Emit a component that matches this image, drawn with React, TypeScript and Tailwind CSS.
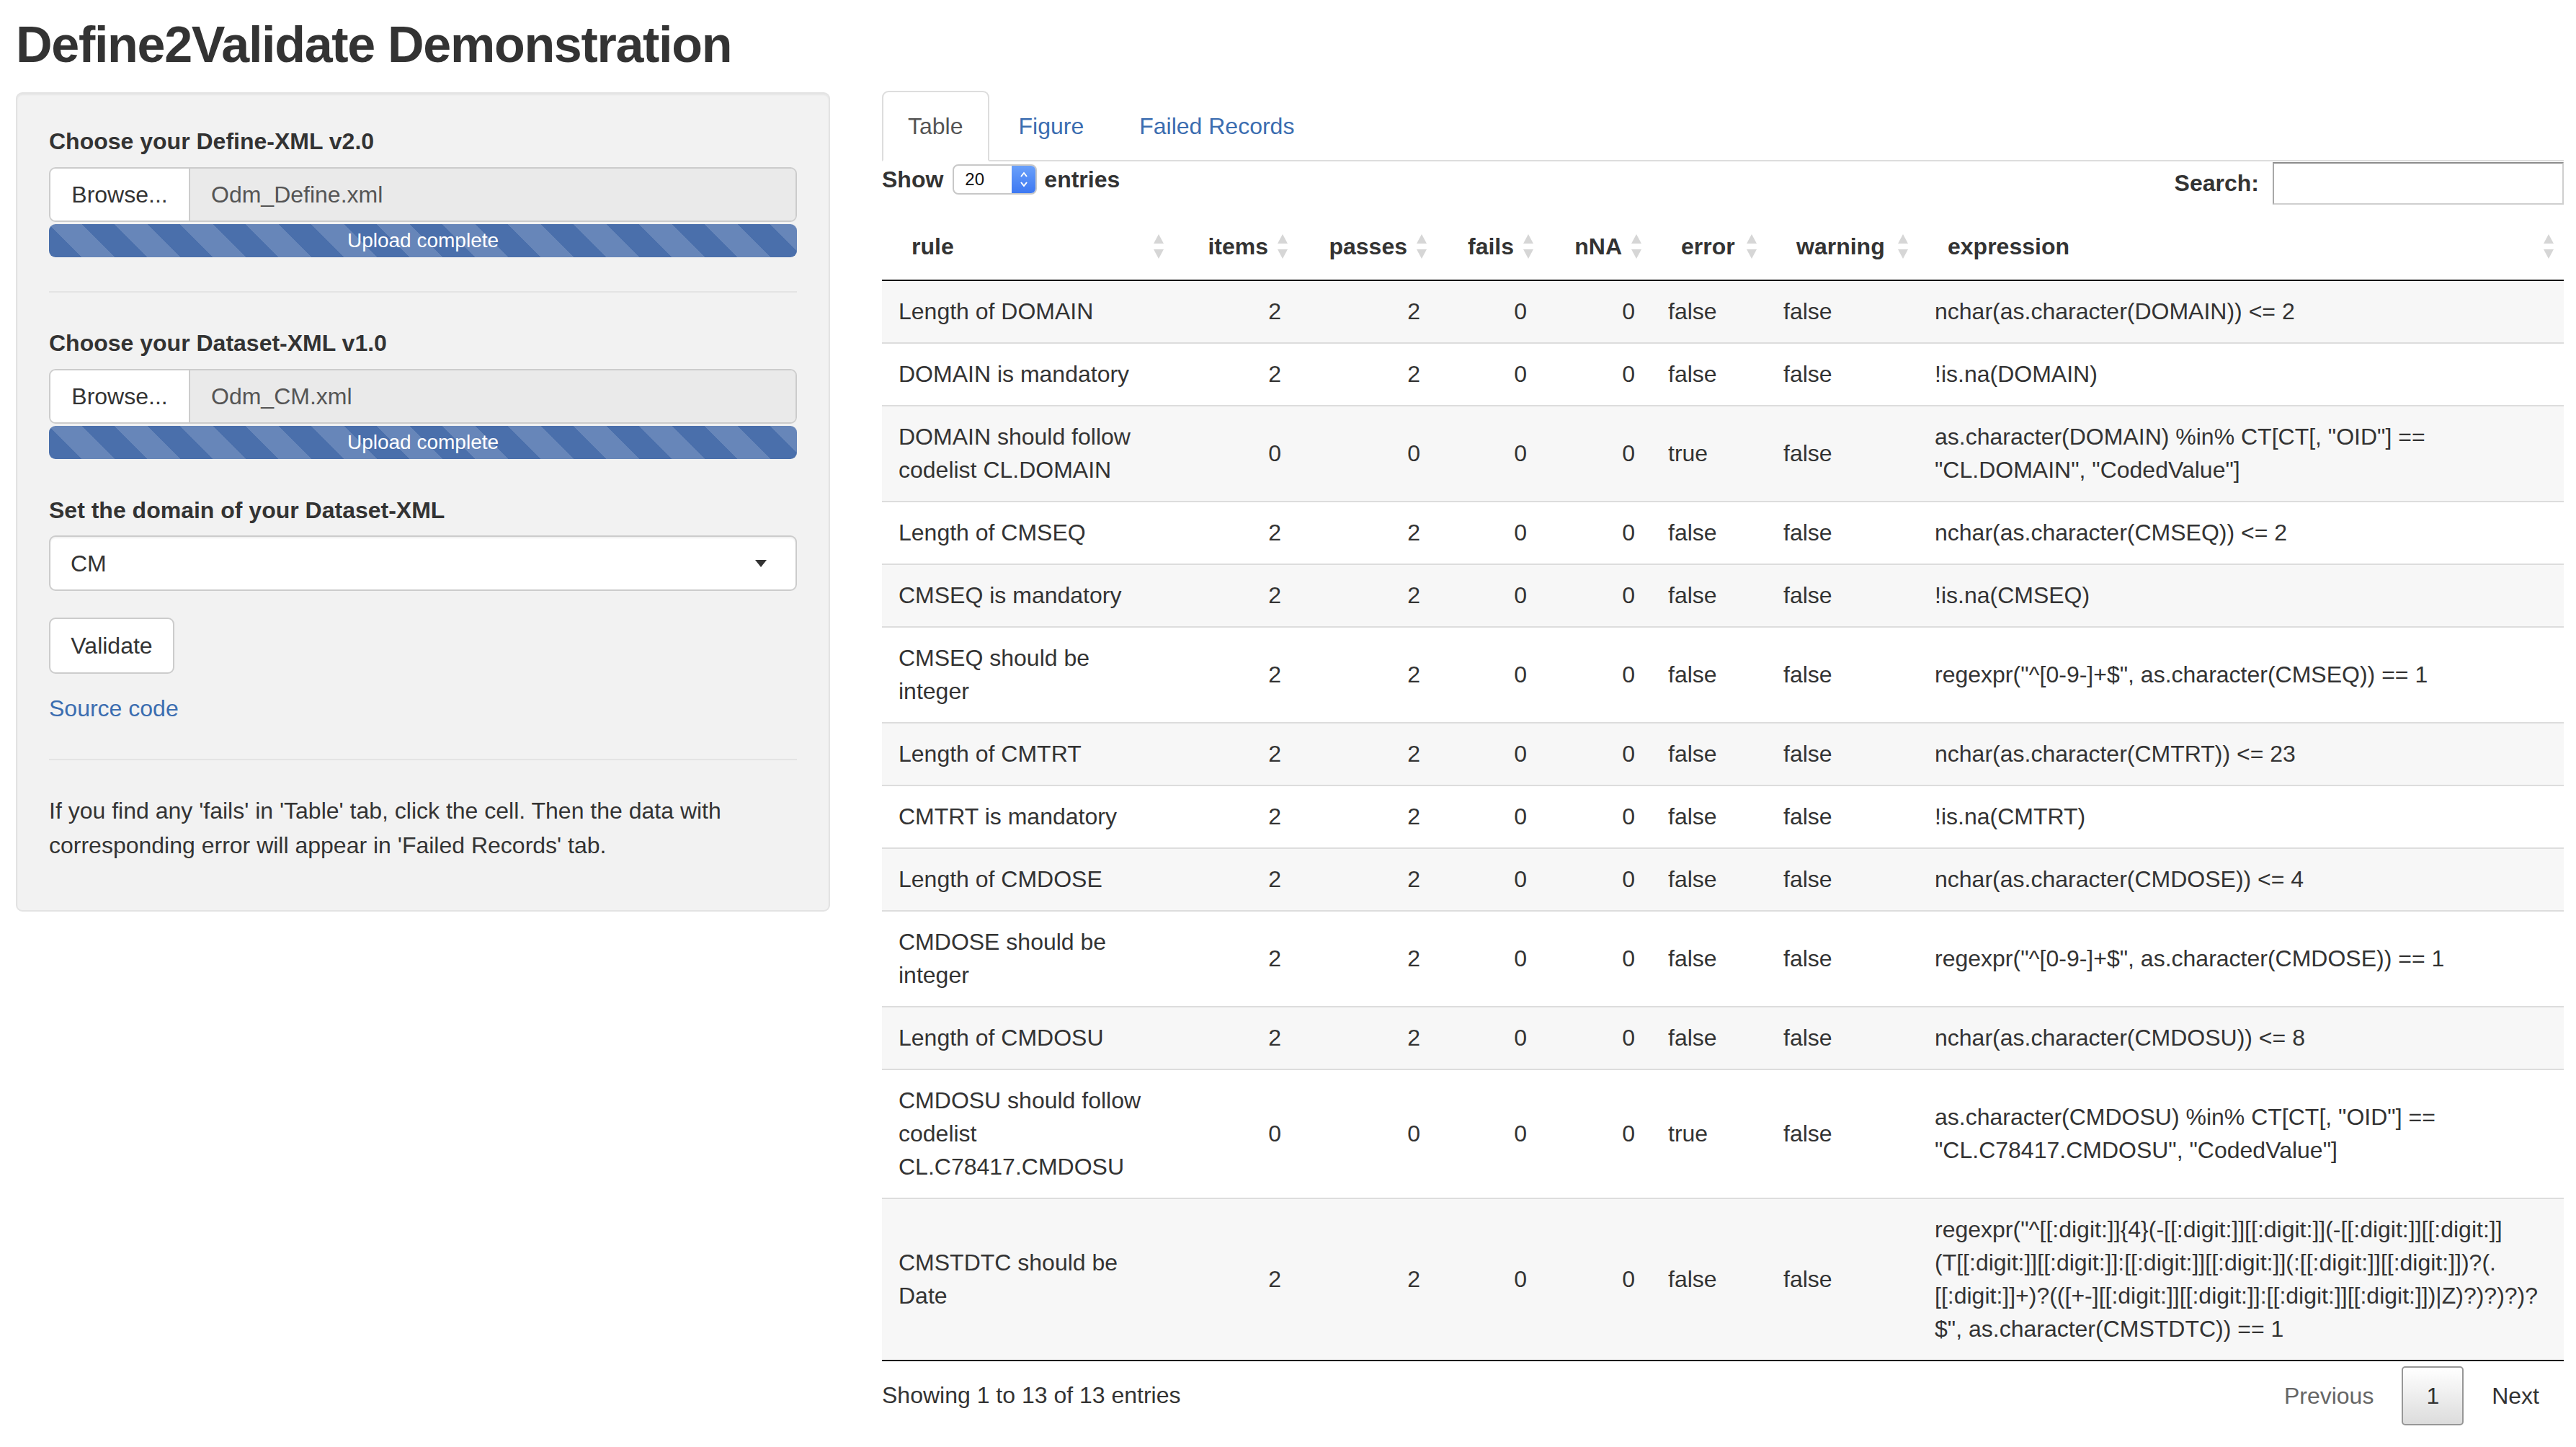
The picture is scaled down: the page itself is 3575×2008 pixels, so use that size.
import React from 'react';

interface RuleRow {
  rule: string[];
  items: number;
  passes: number;
  fails: number;
  nNA: number;
  error: string;
  warning: string;
  expression: string[];
}

const rows: RuleRow[] = [
  { rule: ['Length of DOMAIN'], items: 2, passes: 2, fails: 0, nNA: 0, error: 'false', warning: 'false', expression: ['nchar(as.character(DOMAIN)) <= 2'] },
  { rule: ['DOMAIN is mandatory'], items: 2, passes: 2, fails: 0, nNA: 0, error: 'false', warning: 'false', expression: ['!is.na(DOMAIN)'] },
  { rule: ['DOMAIN should follow', 'codelist CL.DOMAIN'], items: 0, passes: 0, fails: 0, nNA: 0, error: 'true', warning: 'false', expression: ['as.character(DOMAIN) %in% CT[CT[, "OID"] ==', '"CL.DOMAIN", "CodedValue"]'] },
  { rule: ['Length of CMSEQ'], items: 2, passes: 2, fails: 0, nNA: 0, error: 'false', warning: 'false', expression: ['nchar(as.character(CMSEQ)) <= 2'] },
  { rule: ['CMSEQ is mandatory'], items: 2, passes: 2, fails: 0, nNA: 0, error: 'false', warning: 'false', expression: ['!is.na(CMSEQ)'] },
  { rule: ['CMSEQ should be', 'integer'], items: 2, passes: 2, fails: 0, nNA: 0, error: 'false', warning: 'false', expression: ['regexpr("^[0-9-]+$", as.character(CMSEQ)) == 1'] },
  { rule: ['Length of CMTRT'], items: 2, passes: 2, fails: 0, nNA: 0, error: 'false', warning: 'false', expression: ['nchar(as.character(CMTRT)) <= 23'] },
  { rule: ['CMTRT is mandatory'], items: 2, passes: 2, fails: 0, nNA: 0, error: 'false', warning: 'false', expression: ['!is.na(CMTRT)'] },
  { rule: ['Length of CMDOSE'], items: 2, passes: 2, fails: 0, nNA: 0, error: 'false', warning: 'false', expression: ['nchar(as.character(CMDOSE)) <= 4'] },
  { rule: ['CMDOSE should be', 'integer'], items: 2, passes: 2, fails: 0, nNA: 0, error: 'false', warning: 'false', expression: ['regexpr("^[0-9-]+$", as.character(CMDOSE)) == 1'] },
  { rule: ['Length of CMDOSU'], items: 2, passes: 2, fails: 0, nNA: 0, error: 'false', warning: 'false', expression: ['nchar(as.character(CMDOSU)) <= 8'] },
  { rule: ['CMDOSU should follow', 'codelist', 'CL.C78417.CMDOSU'], items: 0, passes: 0, fails: 0, nNA: 0, error: 'true', warning: 'false', expression: ['as.character(CMDOSU) %in% CT[CT[, "OID"] ==', '"CL.C78417.CMDOSU", "CodedValue"]'] },
  {
    rule: ['CMSTDTC should be', 'Date'],
    items: 2,
    passes: 2,
    fails: 0,
    nNA: 0,
    error: 'false',
    warning: 'false',
    expression: [
      'regexpr("^[[:digit:]]{4}(-[[:digit:]][[:digit:]](-[[:digit:]][[:digit:]]',
      '(T[[:digit:]][[:digit:]]:[[:digit:]][[:digit:]](:[[:digit:]][[:digit:]])?(.',
      '[[:digit:]]+)?(([+-][[:digit:]][[:digit:]]:[[:digit:]][[:digit:]])|Z)?)?)?)?',
      '$", as.character(CMSTDTC)) == 1',
    ],
  },
];

const headers = [
  { label: 'rule', className: 'w-[405px] text-left pl-[41px]' },
  { label: 'items', className: 'w-[172px] text-right' },
  { label: 'passes', className: 'w-[193px] text-right' },
  { label: 'fails', className: 'w-[148px] text-right' },
  { label: 'nNA', className: 'w-[150px] text-right' },
  { label: 'error', className: 'w-[160px] text-left pl-[41px]' },
  { label: 'warning', className: 'w-[210px] text-left pl-[41px]' },
  { label: 'expression', className: 'w-[896px] text-left pl-[41px]' },
];

const SortIcon = () => (
  <svg className="absolute right-[13px] top-1/2 -translate-y-1/2" width="16" height="36" viewBox="0 0 16 36">
    <path d="M8 1 L15 14 L1 14 Z" fill="#d6d6d6" />
    <path d="M1 22 L15 22 L8 35 Z" fill="#d6d6d6" />
  </svg>
);

const FileField = ({ name }: { name: string }) => (
  <div>
    <div className="flex h-[76px] rounded-[9px] border-2 border-[#ccc] overflow-hidden">
      <div className="w-[194px] bg-white border-r-2 border-[#ccc] flex items-center justify-center text-[#333]">
        Browse...
      </div>
      <div className="flex-1 bg-[#eaeaea] flex items-center pl-[29px] text-[#555]">{name}</div>
    </div>
    <div className="mt-[3px] h-[46px] rounded-[9px] bg-[#4a6fab] bg-[linear-gradient(45deg,rgba(255,255,255,.16)_25%,transparent_25%,transparent_50%,rgba(255,255,255,.16)_50%,rgba(255,255,255,.16)_75%,transparent_75%,transparent)] bg-[length:91px_91px] text-center text-white text-[28px] leading-[46px]">
      Upload complete
    </div>
  </div>
);

const Sidebar = () => (
  <div className="w-[1130px] shrink-0 rounded-[9px] border-2 border-[#e3e3e3] bg-[#f2f2f2] px-[44px] pt-[43px] pb-[43px] shadow-[inset_0_2px_2px_rgba(0,0,0,0.05)]">
    <p className="font-bold leading-[46px] mb-[13px]">Choose your Define-XML v2.0</p>
    <FileField name="Odm_Define.xml" />
    <div className="mt-[47px] h-[2px] bg-[#e4e4e4]" />
    <p className="mt-[47px] font-bold leading-[46px] mb-[13px]">Choose your Dataset-XML v1.0</p>
    <FileField name="Odm_CM.xml" />
    <p className="mt-[48px] font-bold leading-[46px] mb-[12px]">Set the domain of your Dataset-XML</p>
    <div className="h-[77px] rounded-[9px] border-2 border-[#ccc] bg-white flex items-center justify-between pl-[28px] pr-[40px] shadow-[inset_0_2px_2px_rgba(0,0,0,0.06)]">
      <span className="text-[#333]">CM</span>
      <svg width="16" height="10" viewBox="0 0 16 10">
        <path d="M0 0 L16 0 L8 10 Z" fill="#333" />
      </svg>
    </div>
    <button className="mt-[37px] h-[78px] w-[174px] rounded-[9px] border-2 border-[#ccc] bg-white text-[#333] leading-[46px]">
      Validate
    </button>
    <p className="mt-[25px] leading-[46px] text-[#3b6db0]">Source code</p>
    <div className="mt-[47px] h-[2px] bg-[#e4e4e4]" />
    <p className="mt-[46px] leading-[48px] mb-[23px]">
      If you find any 'fails' in 'Table' tab, click the cell. Then the data with
      <br />
      corresponding error will appear in 'Failed Records' tab.
    </p>
  </div>
);

const Tabs = () => (
  <div className="flex border-b-2 border-[#ddd] -mt-[2px]">
    <div className="-mb-[2px] rounded-t-[9px] border-2 border-[#ddd] border-b-white bg-white px-[34px] py-[24px] leading-[46px] text-[#555]">
      Table
    </div>
    <div className="ml-[5px] -mb-[2px] border-2 border-transparent px-[34px] py-[24px] leading-[46px] text-[#3b6db0]">
      Figure
    </div>
    <div className="ml-[5px] -mb-[2px] border-2 border-transparent px-[34px] py-[24px] leading-[46px] text-[#3b6db0]">
      Failed Records
    </div>
  </div>
);

const Controls = () => (
  <div className="flex h-[60px] items-start justify-between">
    <div className="mt-[2px] flex items-center font-bold leading-[46px]">
      <span>Show</span>
      <div className="ml-[13px] mr-[10px] flex h-[42px] w-[117px] overflow-hidden rounded-[8px] border-2 border-[#c8c8c8] bg-white">
        <span className="flex-1 pl-[15px] text-[24px] font-normal leading-[38px] text-[#111]">20</span>
        <div className="flex w-[33px] flex-col items-center justify-center bg-[linear-gradient(#6aa0fa,#3d78f2)]">
          <svg width="12" height="24" viewBox="0 0 12 24">
            <path d="M2 8 L6 3 L10 8" stroke="white" strokeWidth="2" fill="none" />
            <path d="M2 16 L6 21 L10 16" stroke="white" strokeWidth="2" fill="none" />
          </svg>
        </div>
      </div>
      <span>entries</span>
    </div>
    <div className="flex h-[60px] items-center">
      <span className="font-bold">Search:</span>
      <div className="ml-[19px] h-[59px] w-[404px] border-2 border-[#cfcfcf] border-t-[#8c8c8c] border-l-[#a8a8a8] bg-white" />
    </div>
  </div>
);

const RulesTable = () => (
  <table className="mt-[12px] w-[2334px] table-fixed border-separate border-spacing-0 border-b-2 border-[#111]">
    <thead>
      <tr>
        {headers.map((h) => (
          <th
            key={h.label}
            className={`relative border-b-2 border-[#111] py-[23px] pr-[41px] align-middle font-bold leading-[46px] ${h.className}`}
          >
            {h.label}
            <SortIcon />
          </th>
        ))}
      </tr>
    </thead>
    <tbody>
      {rows.map((r, i) => {
        const bg = i % 2 === 0 ? 'bg-[#f7f7f7]' : 'bg-white';
        const border = i === 0 ? '' : 'border-t-2 border-[#ddd]';
        const cell = `${border} px-[23px] pt-[19px] pb-[20px] align-middle leading-[46px]`;
        return (
          <tr key={i} className={bg}>
            <td className={cell}>
              {r.rule.map((l) => (
                <div key={l} className="whitespace-nowrap">{l}</div>
              ))}
            </td>
            <td className={`${cell} text-right`}>{r.items}</td>
            <td className={`${cell} text-right`}>{r.passes}</td>
            <td className={`${cell} text-right`}>{r.fails}</td>
            <td className={`${cell} text-right`}>{r.nNA}</td>
            <td className={cell}>{r.error}</td>
            <td className={cell}>{r.warning}</td>
            <td className={cell}>
              {r.expression.map((l) => (
                <div key={l} className="whitespace-nowrap">{l}</div>
              ))}
            </td>
          </tr>
        );
      })}
    </tbody>
  </table>
);

const Footer = () => (
  <div className="flex items-start justify-between">
    <p className="mt-[24px] leading-[46px]">Showing 1 to 13 of 13 entries</p>
    <div className="mt-[7px] flex gap-[5px] leading-[46px]">
      <span className="rounded-[5px] border-2 border-transparent px-[32px] py-[16px] text-[#666]">Previous</span>
      <span className="rounded-[5px] border-2 border-[#979797] bg-[linear-gradient(#ffffff,#dcdcdc)] px-[32px] py-[16px] text-[#333]">
        1
      </span>
      <span className="rounded-[5px] border-2 border-transparent px-[32px] py-[16px] text-[#333]">Next</span>
    </div>
  </div>
);

export default function App() {
  return (
    <div className="min-h-screen bg-white font-['Liberation_Sans',Arial,sans-serif] text-[32px] text-[#333]">
      <div className="pl-[22px]">
        <h2 className="pt-[24px] text-[70px] font-bold leading-[77px] tracking-[-1.3px] text-[#333]">
          Define2Validate Demonstration
        </h2>
        <div className="mt-[27px] flex items-start">
          <Sidebar />
          <div className="ml-[72px] w-[2334px]">
            <Tabs />
            <Controls />
            <RulesTable />
            <Footer />
          </div>
        </div>
      </div>
    </div>
  );
}
